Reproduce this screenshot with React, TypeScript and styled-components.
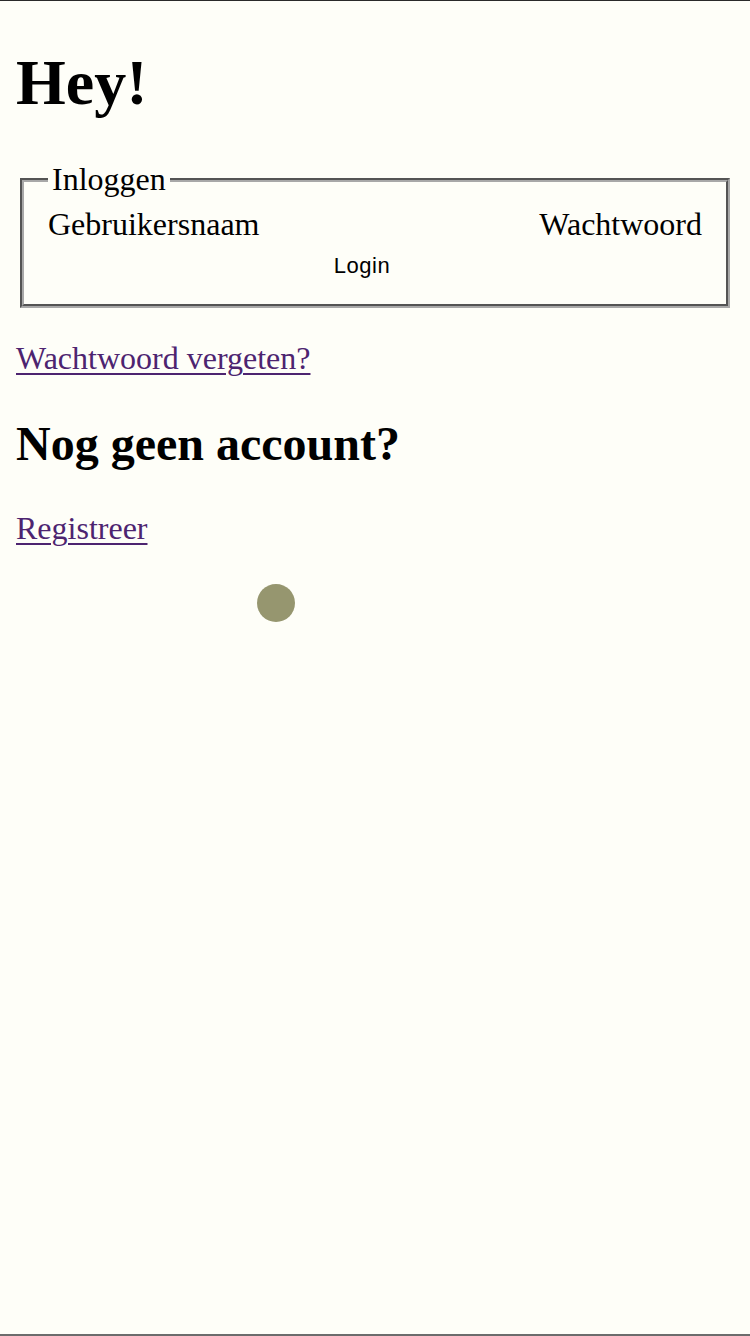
import React from "react";
import styled, { createGlobalStyle } from "styled-components";

const Global = createGlobalStyle`
  html, body {
    margin: 0;
    padding: 0;
    background: #fefef8;
  }
  body {
    font-family: "Liberation Serif", "Times New Roman", serif;
    font-size: 32px;
    color: #000;
  }
`;

const Page = styled.div`
  box-sizing: border-box;
  min-height: 1336px;
  border-top: 1px solid #2a2a2a;
  border-bottom: 2px solid #6c6c6c;
  padding: 0 16px;
  position: relative;
  display: flow-root;
`;

const Title = styled.h1`
  font-size: 64px;
  font-weight: bold;
  line-height: 71px;
  margin: 46px 0 43px;
`;

const Form = styled.form`
  margin: 0;
`;

const Fieldset = styled.fieldset`
  margin: 0 4px;
  padding: 8px 24px 22px;
  border: 4px groove #a8a8a8;
  min-width: 0;
`;

const Legend = styled.legend`
  padding: 0 4px;
  font-size: 32px;
  line-height: 37px;
`;

const LabelRow = styled.div`
  display: flex;
  justify-content: space-between;
  align-items: baseline;
  line-height: 37px;
`;

const Label = styled.label`
  font-size: 32px;
`;

const ButtonRow = styled.div`
  display: flex;
  justify-content: center;
  margin-top: 7px;
`;

const LoginButton = styled.button`
  appearance: none;
  background: transparent;
  border: none;
  padding: 2px 12px;
  margin-right: 26px;
  font-family: "Liberation Sans", Arial, Helvetica, sans-serif;
  font-size: 22px;
  letter-spacing: 0.5px;
  line-height: 28px;
  color: #000;
  cursor: pointer;
`;

const Para = styled.p`
  margin: 32px 0;
  line-height: 37px;
`;

const Link = styled.a`
  color: #4d2470;
  text-decoration: underline;
  text-decoration-thickness: 2px;
  text-underline-offset: 4px;
`;

const SubTitle = styled.h2`
  font-size: 48px;
  font-weight: bold;
  line-height: 53px;
  margin: 40px 0;
`;

const Dot = styled.div`
  position: absolute;
  left: 257px;
  top: 583px;
  width: 38px;
  height: 38px;
  border-radius: 50%;
  background: #96966f;
`;

export default function App() {
  return (
    <>
      <Global />
      <Page>
        <Title>Hey!</Title>
        <Form onSubmit={(e) => e.preventDefault()}>
          <Fieldset>
            <Legend>Inloggen</Legend>
            <LabelRow>
              <Label>Gebruikersnaam</Label>
              <Label>Wachtwoord</Label>
            </LabelRow>
            <ButtonRow>
              <LoginButton type="submit">Login</LoginButton>
            </ButtonRow>
          </Fieldset>
        </Form>
        <Para>
          <Link href="#">Wachtwoord vergeten?</Link>
        </Para>
        <SubTitle>Nog geen account?</SubTitle>
        <Para>
          <Link href="#">Registreer</Link>
        </Para>
        <Dot />
      </Page>
    </>
  );
}
